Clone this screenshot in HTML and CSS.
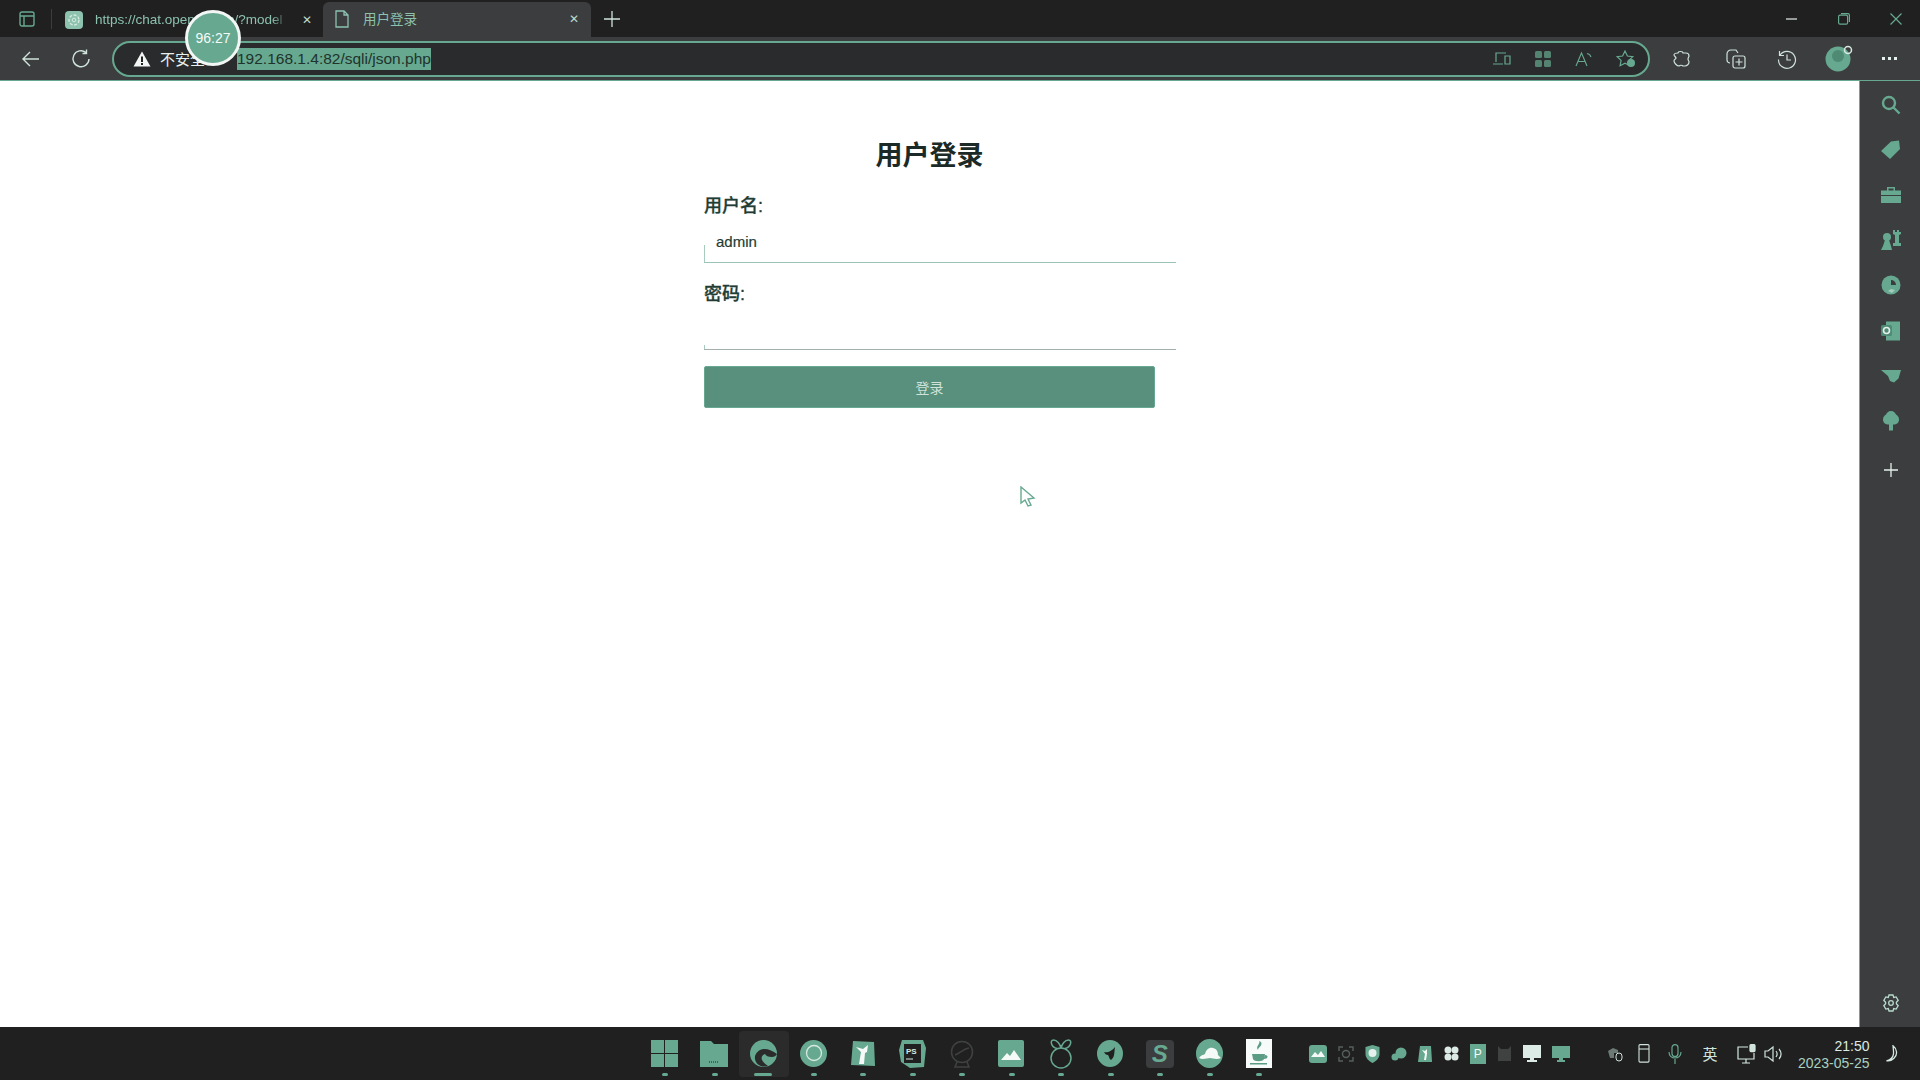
FILE: index.html
```html
<!DOCTYPE html>
<html lang="zh-CN">
<head>
    <meta charset="UTF-8">
    <title>用户登录</title>
    <link rel="stylesheet" href="styles.css">
</head>
<body>
<div class="screen">
    <!-- tab strip -->
    <div class="titlebar">
        <div class="tab-toggle">
            <svg width="16" height="16" viewBox="0 0 16 16" fill="none" stroke="currentColor" stroke-width="1.4"><rect x="1" y="1" width="14" height="14" rx="2"/><path d="M1 5h14M5 5v10"/></svg>
        </div>
        <div class="tab-sep"></div>
        <div class="tab">
            <svg class="favicon" width="18" height="18" viewBox="0 0 18 18"><rect width="18" height="18" rx="4" fill="currentColor"/><circle cx="9" cy="9" r="5" fill="none" stroke="#d6e9e1" stroke-width="1.4" stroke-dasharray="3 1.5"/><circle cx="9" cy="9" r="1.8" fill="none" stroke="#d6e9e1"/></svg>
            <span class="tab-title tab-fade">https://chat.openai.com/?model</span>
            <span class="tab-close">✕</span>
        </div>
        <div class="tab tab-active">
            <svg class="favicon" width="16" height="18" viewBox="0 0 16 18" fill="none" stroke="currentColor" stroke-width="1.3"><path d="M2 1h8l4 4v12H2zM10 1v4h4"/></svg>
            <span class="tab-title">用户登录</span>
            <span class="tab-close">✕</span>
        </div>
        <svg class="new-tab" width="16" height="16" viewBox="0 0 16 16" stroke="#cfe3da" stroke-width="1.3"><path d="M8 0v16M0 8h16"/></svg>
        <div class="win-controls">
            <svg width="12" height="12" viewBox="0 0 12 12" stroke="#e6f0ec" stroke-width="1.2"><path d="M0 6h11"/></svg>
            <svg width="12" height="12" viewBox="0 0 12 12" fill="none" stroke="currentColor" stroke-width="1.2"><rect x="0.6" y="2.2" width="9" height="9" rx="1.5"/><path d="M3 0.6h7a1.5 1.5 0 0 1 1.4 1.4v7"/></svg>
            <svg width="12" height="12" viewBox="0 0 12 12" stroke="currentColor" stroke-width="1.2"><path d="M0.5 0.5l11 11M11.5 0.5l-11 11"/></svg>
        </div>
    </div>

    <!-- address bar row -->
    <div class="toolbar">
        <svg class="nav-btn" width="20" height="20" viewBox="0 0 20 20" fill="none" stroke="#cfe3da" stroke-width="1.4"><path d="M18 10H2M9 3l-7 7 7 7"/></svg>
        <svg class="nav-btn" width="20" height="20" viewBox="0 0 20 20" fill="none" stroke="#cfe3da" stroke-width="1.4"><path d="M15 3.5A8 8 0 1 0 18 10M15.500 0.500v4h-4"/></svg>
        <div class="addressbar">
            <svg class="warn" width="18" height="16" viewBox="0 0 18 16"><path d="M9 0.500L17.500 15.500H0.500z" fill="#f2f7f5"/><path d="M8 5.500h2v5.500H8zM8 12h2v2H8z" fill="#202020"/></svg>
            <span class="insecure">不安全</span>
            <span class="url">192.168.1.4:82/sqli/json.php</span>
            <div class="addr-icons">
                <svg width="18" height="16" viewBox="0 0 18 16" fill="none" stroke="currentColor" stroke-width="1.2"><path d="M3 11V2h10M0 13h10M12 5h5v8h-5z"/></svg>
                <svg width="18" height="18" viewBox="0 0 18 18" fill="currentColor"><rect x="1" y="1" width="7" height="7" rx="1.500" opacity="0.700"/><rect x="10" y="1" width="7" height="7" rx="1.500" opacity="0.700"/><rect x="1" y="10" width="7" height="7" rx="1.500" opacity="0.700"/><rect x="10" y="10" width="7" height="7" rx="1.500" opacity="0.700"/></svg>
                <svg width="18" height="16" viewBox="0 0 18 16" fill="none" stroke="currentColor" stroke-width="1.1"><path d="M1 15L6.500 2 12 15M3 10.500h7M12 2.500a5 5 0 0 1 4 3.500"/></svg>
                <svg width="20" height="18" viewBox="0 0 20 18" fill="none" stroke="currentColor" stroke-width="1.2"><path d="M9 1l2.400 5 5.400 0.700-3.900 3.700 1 5.300L9 13.200 4.100 15.700l1-5.300L1.200 6.700 6.600 6z"/><circle cx="15" cy="13" r="4" fill="currentColor" stroke="none"/></svg>
            </div>
        </div>
        <div class="tool-icons">
            <svg class="t-ext" width="18" height="18" viewBox="0 0 18 18" fill="none" stroke="#cfe3da" stroke-width="1.2"><path d="M6 3c0-2 5-2 5 0h3c2 0 3 1.500 3 3 0 1-1 1.500-1 3s1 2 1 3c0 2-2 4-4 4h-2c-1-1-3-1-4 0-2 0-5-3-5-5s2-2 2-3-2-2-2-3c0-1 2-2 4-2z"/></svg>
            <svg class="t-coll" width="20" height="20" viewBox="0 0 20 20" fill="none" stroke="#cfe3da" stroke-width="1.2"><path d="M4 14A3 3 0 0 1 1 11V5a4 4 0 0 1 4-4h5l2 3"/><rect x="7" y="7" width="12" height="12" rx="2"/><path d="M13 9.500v7M9.500 13h7"/></svg>
            <svg class="t-hist" width="20" height="20" viewBox="0 0 20 20" fill="none" stroke="#cfe3da" stroke-width="1.2"><path d="M3 6a8.500 8.500 0 1 1-1.500 4.500M2.500 2v4.500H7M10 5.500V11h4"/></svg>
            <svg class="t-avatar" width="28" height="28" viewBox="0 0 28 28"><circle cx="13" cy="14" r="12.500" fill="currentColor"/><circle cx="13" cy="11" r="6" fill="#4f8a75"/><circle cx="23" cy="5" r="3.500" fill="none" stroke="#d6e9e1" stroke-width="1.5"/></svg>
            <div class="t-more"><i></i><i></i><i></i></div>
        </div>
    </div>

    <div class="middle">
        <main class="page">
            <form class="login">
                <h1>用户登录</h1>
                <label class="field-label">用户名:</label>
                <input class="field-input user" type="text" value="admin">
                <label class="field-label">密码:</label>
                <input class="field-input pass" type="password">
                <button class="submit" type="button">登录</button>
            </form>
        </main>
        <aside class="sidebar">
            <div class="side-list">
                <svg width="20" height="20" viewBox="0 0 20 20" fill="none" stroke="currentColor" stroke-width="2.400"><circle cx="8" cy="8" r="6"/><path d="M12.500 12.500l6 6"/></svg>
                <svg width="20" height="20" viewBox="0 0 20 20" fill="currentColor"><path d="M0 11L10 1.500 18 0.500 19 9 9 19z"/></svg>
                <svg width="20" height="18" viewBox="0 0 20 18" fill="currentColor"><path d="M0 4.500h20V17H0zM6 4.500V1h8v3.500h-1.500V2.500h-5v2z"/><path d="M0 9.500h20" stroke="#3b3d3f"/></svg>
                <svg width="21" height="22" viewBox="0 0 21 22" fill="currentColor"><path d="M12 1h2v2h2V1h2v2h2v2l-2 1v8h2v3h-8v-3h2V6l-2-1z"/><circle cx="6" cy="8" r="4"/><path d="M4 11h4l2 6 1 4H0l2-4z"/></svg>
                <svg width="20" height="20" viewBox="0 0 20 20"><circle cx="10" cy="10" r="9.500" fill="currentColor"/><path d="M10 5a5 5 0 0 1 5 5L10 10z" fill="#3b3d3f"/><path d="M7 16l3-2 4 1-3 3z" fill="#cfe3da" opacity="0.600"/></svg>
                <svg width="20" height="20" viewBox="0 0 20 20"><path d="M5 0.500h14v19H5z" fill="currentColor"/><rect x="0" y="4" width="11" height="11" rx="1.500" fill="#4f8a75"/><circle cx="5.500" cy="9.500" r="3" fill="none" stroke="#e6f0ec" stroke-width="1.600"/></svg>
                <svg width="20" height="14" viewBox="0 0 20 14" fill="currentColor"><path d="M0 1h20l-2.500 8.500L13 13.500 9 12 7 7z"/></svg>
                <svg width="16" height="20" viewBox="0 0 16 20" fill="currentColor"><path d="M8 0c3 0 4 2 5 3.500 2 1 3 3 3 5 0 3-2 5-6 5v6H6v-6c-4 0-6-2-6-5 0-2 1-4 3-5C4 2 5 0 8 0z"/></svg>
                <svg class="side-plus" width="14" height="14" viewBox="0 0 14 14" stroke="#e6f0ec" stroke-width="1.300"><path d="M7 0v14M0 7h14"/></svg>
            </div>
            <svg width="18" height="18" viewBox="0 0 18 18" fill="none" stroke="#b9dacd" stroke-width="1.300"><path d="M7 1h4l0.700 2.500 2.500-0.600 2 3.400-1.800 2 0 1.400 1.800 2-2 3.400-2.500-0.600L11 17H7l-0.700-2.500-2.500 0.600-2-3.400 1.800-2 0-1.400-1.800-2 2-3.400 2.500 0.600z"/><circle cx="9" cy="9" r="2.300"/></svg>
        </aside>
    </div>

    <!-- windows taskbar -->
    <div class="taskbar">
        <div class="apps">
            <div class="app"><svg width="27" height="27" viewBox="0 0 27 27" fill="currentColor"><path d="M0 0h13v13H0zM14 0h13v13H14zM0 14h13v13H0zM14 14h13v13H14z"/></svg></div>
            <div class="app"><svg width="28" height="26" viewBox="0 0 28 26" fill="currentColor"><path d="M0 0h11l3 3h14v23H0z"/><path d="M9 21h10" stroke="#202020" stroke-dasharray="1 1"/></svg></div>
            <div class="app app-on"><svg width="27" height="27" viewBox="0 0 27 27"><circle cx="13.500" cy="13.500" r="13.500" fill="currentColor"/><path d="M14 9c5 0 9 2 13 5-1 2-3 3-5 3-4 0-6-1-7-3-3 1-4 3-3 6 1 2 3 4 6 6-6 2-12-1-13-7-1-5 4-10 9-10z" fill="#2b2b2b"/></svg></div>
            <div class="app"><svg width="27" height="27" viewBox="0 0 27 27"><circle cx="13.500" cy="13.500" r="13.500" fill="currentColor"/><circle cx="14" cy="13" r="7.500" fill="none" stroke="#d6e9e1" stroke-width="1.300"/></svg></div>
            <div class="app"><svg width="25" height="27" viewBox="0 0 25 27"><path d="M3 1l21 1 1 24-24-1z" fill="currentColor"/><path d="M6 7l7 2 5-4-1 7-2 1-1 11H9l2-12z" fill="#f5faf8"/></svg></div>
            <div class="app"><svg width="27" height="29" viewBox="0 0 27 29"><path d="M3 1h21l3 8-2 19-14 1-9-6-2-12z" fill="currentColor"/><rect x="5" y="5" width="17" height="19" fill="#202020"/><text class="ps-text" x="7" y="15">PS</text><path d="M7 20h7" stroke="#d6e9e1"/></svg></div>
            <div class="app"><svg width="24" height="28" viewBox="0 0 24 28" fill="none" stroke="#3f4241" stroke-width="1.500"><circle cx="12" cy="12" r="10.500"/><path d="M5 15c4-1 8-6 14-7M7 22l-2 5h14l-2-5"/></svg></div>
            <div class="app"><svg width="26" height="27" viewBox="0 0 26 27"><rect width="26" height="27" rx="2" fill="currentColor"/><path d="M3 20l6-7 3 3 4-6 7 10z" fill="#f5faf8"/></svg></div>
            <div class="app"><svg width="26" height="30" viewBox="0 0 26 30" fill="none" stroke="currentColor" stroke-width="1.500"><circle cx="13" cy="19" r="10"/><path d="M9 9.500C3 8 1.500 1 5.500 1 9 1 12 5 13 9c1-4 4-8 7.500-8 4 0 2.500 7-3.500 8.500"/></svg></div>
            <div class="app"><svg width="26" height="27" viewBox="0 0 26 27"><ellipse cx="13" cy="13.500" rx="13" ry="13.500" fill="currentColor"/><path d="M7 12c4 1 8-1 11-5-1 6 0 10-4 13-2-1-2-4-3-5-2 0-3-1-4-3z" fill="#202020"/></svg></div>
            <div class="app"><span class="sublime">S</span></div>
            <div class="app"><svg width="27" height="29" viewBox="0 0 27 29"><ellipse cx="13.500" cy="14.500" rx="13.500" ry="14.500" fill="currentColor"/><path d="M3 19c2-3 4-3 6-4 1-4 4-7 8-6 4 1 5 4 5 7l3 3c-5 2-8 0-11 0s-7 2-11 0z" fill="#f5faf8"/></svg></div>
            <div class="app"><svg width="26" height="29" viewBox="0 0 26 29"><rect width="26" height="29" fill="#f7fbf9"/><path d="M13 2c2 3-4 5-1 9 0-3 5-4 3-8zM6 15h13l-1 5c-1 3-10 3-11 0zM4 24h17v1.500H4zM19 16c4 0 3 4-1 4" fill="#5b9c85"/></svg></div>
        </div>
        <div class="tray-apps">
            <svg width="18" height="18" viewBox="0 0 18 18"><rect width="18" height="18" rx="3" fill="currentColor"/><path d="M2 12l4-5 3 3 3-4 4 6z" fill="#f5faf8"/></svg>
            <svg width="16" height="16" viewBox="0 0 16 16" fill="none" stroke="#56605c" stroke-width="1.400"><path d="M1 5V1h4M11 1h4v4M15 11v4h-4M5 15H1v-4"/><circle cx="8" cy="8" r="3.500"/></svg>
            <svg width="15" height="18" viewBox="0 0 15 18"><path d="M0.500 2l7-2 7 2v7c0 4-3 7-7 9-4-2-7-5-7-9z" fill="currentColor"/><circle cx="7.500" cy="8" r="4" fill="#e6f0ec"/></svg>
            <svg width="16" height="14" viewBox="0 0 16 14"><circle cx="10" cy="6" r="5.500" fill="currentColor"/><circle cx="4" cy="10" r="3.500" fill="currentColor"/></svg>
            <svg width="14" height="16" viewBox="0 0 14 16"><path d="M2 0h11l1 16H0z" fill="currentColor"/><path d="M4 4l3 1 2-2v5l-1 6H6l1-6z" fill="#f5faf8"/></svg>
            <svg width="15" height="15" viewBox="0 0 15 15" fill="#dcebe5"><circle cx="4" cy="4" r="3.500"/><circle cx="11" cy="4" r="3.500"/><circle cx="4" cy="11" r="3.500"/><circle cx="11" cy="11" r="3.500"/></svg>
            <span class="tray-p">P</span>
            <svg width="15" height="15" viewBox="0 0 15 15" fill="#3f4241"><path d="M1 0l3 3h7l3-3v15H1z"/></svg>
            <svg width="18" height="17" viewBox="0 0 18 17"><path d="M0 0h18v13H11v2h3v2H4v-2h3v-2H0z" fill="#dcebe5"/></svg>
            <svg width="18" height="16" viewBox="0 0 18 16" fill="currentColor"><path d="M0 0h18v12h-7v2h2v2H5v-2h2v-2H0z"/></svg>
        </div>
        <div class="tray-sys">
            <svg class="s-net" width="16" height="16" viewBox="0 0 16 16"><path d="M0 5l5-3 5 2v3H6v5H2z" fill="#6b7a74"/><rect x="8" y="7" width="6" height="8" rx="3" fill="none" stroke="#cfe3da"/></svg>
            <svg class="s-usb" width="12" height="20" viewBox="0 0 12 20" fill="none" stroke="#cfe3da" stroke-width="1.100"><rect x="1" y="0.600" width="10" height="17.500" rx="1"/><path d="M1 5h10"/></svg>
            <svg class="s-mic" width="14" height="20" viewBox="0 0 14 20" fill="none" stroke="currentColor" stroke-width="1.200"><rect x="4" y="0.600" width="6" height="12" rx="3"/><path d="M1 8c0 8 12 8 12 0M7 15v5"/></svg>
            <span class="s-ime">英</span>
            <svg class="s-pc" width="20" height="20" viewBox="0 0 20 20" fill="none" stroke="#d6e9e1" stroke-width="1.200"><path d="M11 3H1v12h16V9M9 15v4M5 19h8"/><rect x="13" y="0.600" width="5" height="7" rx="1" fill="#cfe3da"/></svg>
            <svg class="s-vol" width="20" height="18" viewBox="0 0 20 18" fill="none" stroke="#cfe3da" stroke-width="1.200"><path d="M1 6h3l5-4v14l-5-4H1zM12 6c1.500 2 1.500 4 0 6M15 4c2.500 3 2.500 7 0 10"/></svg>
            <div class="clock"><span class="clock-time">21:50</span><span>2023-05-25</span></div>
            <svg class="s-moon" width="16" height="18" viewBox="0 0 16 18" fill="none" stroke="#d6e9e1" stroke-width="1.300"><path d="M8 0.800c4 3 5 9 1 12.500-2 2-5 3-7.500 2.500 4-1 6.500-3 7-7 0.200-3-0.300-6-0.500-8z"/></svg>
        </div>
    </div>

    <!-- things sitting on top -->
    <div class="timer-badge">96:27</div>
    <svg class="cursor" width="17" height="22" viewBox="0 0 17 22" fill="#fff" stroke="#67a990" stroke-width="1.400"><path d="M1 1v16l4-3 3 6 3-1-3-6 6-1z"/></svg>
</div>
</body>
</html>
```

FILE: styles.css
```css
* {
    box-sizing: border-box;
}
body {
    margin: 0;
    background-color: #fff;
    font-family: "Liberation Sans", "Noto Sans CJK SC", sans-serif;
}
svg {
    display: block;
    flex: none;
}
.screen {
    position: relative;
    display: flex;
    flex-direction: column;
    width: 1920px;
    height: 1080px;
    overflow: hidden;
    color: #67a990; /* everything in the picture is tinted with this green */
}

/* tab strip */
.titlebar {
    display: flex;
    align-items: flex-end;
    height: 37px;
    padding-left: 19px;
    background-color: #202020;
}
.tab-toggle {
    align-self: center;
    width: 24px;
    margin-right: 8px;
}
.tab-sep {
    align-self: center;
    width: 1px;
    height: 20px;
    margin-right: 13px;
    background-color: #3b3d3f;
}
.tab {
    display: flex;
    align-items: center;
    width: 255px;
    height: 35px;
    margin-right: 3px;
    font-size: 13.500px;
    color: #8cc2ae;
}
.tab .favicon {
    margin-right: 12px;
}
.tab-title {
    flex: 1;
    overflow: hidden;
    white-space: nowrap;
}
.tab-fade {
    -webkit-mask-image: linear-gradient(to left, transparent, #000 16px);
    mask-image: linear-gradient(to left, transparent, #000 16px);
}
.tab-close {
    width: 14px;
    margin-right: 4px;
    margin-left: 14px;
    font-size: 12px;
    color: #b9dacd;
}
.tab-active {
    width: 268px;
    padding-left: 11px;
    padding-bottom: 2px;
    background-color: #3b3d3f;
    border-radius: 6px 6px 0 0;
}
.tab-active .favicon {
    margin-right: 13px;
}
.tab-active .tab-title {
    padding-bottom: 2px;
}
.tab-active .tab-close {
    margin-right: 8px;
}
.new-tab {
    align-self: center;
    margin-left: 10px;
}
.win-controls {
    display: flex;
    gap: 40px;
    margin-left: auto;
    margin-right: 18px;
    align-self: center;
}

/* toolbar */
.toolbar {
    display: flex;
    align-items: center;
    height: 44px;
    padding-left: 21px;
    background-color: #3b3d3f;
    border-bottom: 1px solid #67a990;
}
.nav-btn {
    margin-right: 30px;
}
.toolbar .nav-btn:nth-child(2) {
    margin-right: 21px;
}
.addressbar {
    display: flex;
    align-items: center;
    width: 1538px;
    height: 36px;
    padding-left: 19px;
    padding-right: 12px;
    background-color: #2a2b2c;
    border: 2px solid #67a990;
    border-radius: 18px;
    font-size: 15px;
    color: #e6f0ec;
}
.insecure {
    width: 77px;
    margin-left: 9px;
}
.url {
    padding: 2px 0;
    background-color: #67a990;
    color: #20332c;
    font-size: 15.500px;
}
.addr-icons {
    display: flex;
    align-items: center;
    gap: 23px;
    margin-left: auto;
    color: #67a990;
}
.tool-icons {
    display: flex;
    align-items: center;
    padding-left: 22px;
}
.t-coll {
    margin-left: 36px;
}
.t-hist {
    margin-left: 31px;
}
.t-avatar {
    margin-left: 28px;
}
.t-more {
    display: flex;
    gap: 3px;
    margin-left: 29px;
}
.t-more i {
    width: 3px;
    height: 3px;
    background-color: #e6f0ec;
}

/* page */
.middle {
    flex: 1;
    display: flex;
    min-height: 0;
}
.page {
    width: 1859px;
    background-color: #fff;
    display: flex;
    justify-content: center;
}
.login {
    width: 451px;
    padding-top: 55px;
}
.login h1 {
    margin: 0 0 17px;
    text-align: center;
    font-size: 27px;
    line-height: 40px;
    font-weight: 700;
    color: #1b2a26;
}
.field-label {
    display: block;
    height: 26px;
    margin-bottom: 10px;
    font-size: 18px;
    line-height: 26px;
    font-weight: 500;
    color: #1f3d34;
    -webkit-text-stroke: 0.3px #1f3d34;
}
.field-input {
    display: block;
    box-sizing: content-box;
    width: 451px;
    height: 24px;
    margin: 0 0 18px;
    padding: 0 9px 9px 12px;
    border: none;
    border-bottom: 1px solid #9cc4b5;
    outline: none;
    font-family: "Liberation Sans", sans-serif;
    font-size: 15px;
    color: #1f3d34;
    -webkit-text-stroke: 0.2px #1f3d34;
    background: linear-gradient(#a9cbbd, #a9cbbd) no-repeat left bottom / 1px 17px;
}
.field-input.pass {
    height: 32px;
    margin-bottom: 16px;
    padding-bottom: 0;
    border-bottom-color: #a3b0ab;
    background-size: 1px 4px;
}
.submit {
    display: block;
    width: 451px;
    height: 42px;
    border: 1px solid #67a990;
    border-radius: 2px;
    background-color: #588f7d;
    color: #cfe3da;
    font-family: "Liberation Sans", "Noto Sans CJK SC", sans-serif;
    font-size: 14px;
}
.sidebar {
    flex: 1;
    display: flex;
    flex-direction: column;
    align-items: center;
    justify-content: space-between;
    padding: 1px 0 15px 2px;
    background-color: #3b3d3f;
    border-left: 1px solid #67a990;
}
.side-list {
    display: grid;
    grid-auto-rows: 45.200px;
    place-items: center;
}
.side-plus {
    margin-top: 8px;
}

/* taskbar */
.taskbar {
    display: flex;
    align-items: center;
    height: 53px;
    padding-left: 640px;
    background-color: #202020;
}
.apps {
    display: flex;
}
.app {
    position: relative;
    display: flex;
    align-items: center;
    justify-content: center;
    width: 49.500px;
    height: 46px;
}
.app::after {
    content: "";
    position: absolute;
    bottom: 1px;
    left: 22px;
    width: 6px;
    height: 3px;
    border-radius: 2px;
    background-color: #67a990;
}
.app-on {
    background-color: #2b2b2b;
    border-radius: 4px;
}
.app-on::after {
    left: 15px;
    width: 18px;
}
.ps-text {
    font-family: "Liberation Sans", sans-serif;
    font-size: 8px;
    font-weight: 700;
    fill: #d6e9e1;
}
.sublime {
    width: 28px;
    height: 28px;
    border-radius: 4px;
    background-color: #3b3d3f;
    text-align: center;
    font-size: 24px;
    line-height: 28px;
    font-weight: 700;
    font-style: italic;
}
.tray-apps {
    display: flex;
    align-items: center;
    justify-content: space-between;
    width: 262px;
    margin-left: 25px;
}
.tray-p {
    width: 16px;
    height: 20px;
    background-color: #67a990;
    color: #f5faf8;
    font-size: 12px;
    line-height: 20px;
    text-align: center;
}
.tray-sys {
    display: flex;
    align-items: center;
    margin-left: 37px;
    color: #67a990;
}
.s-usb {
    margin-left: 14px;
}
.s-mic {
    margin-left: 18px;
}
.s-ime {
    width: 20px;
    margin-left: 21px;
    font-size: 15px;
    color: #cfe3da;
}
.s-pc {
    margin-left: 14px;
}
.s-vol {
    margin-left: 7px;
}
.clock {
    display: flex;
    flex-direction: column;
    align-items: flex-end;
    width: 82px;
    margin-left: 4px;
    padding-top: 2px;
    font-size: 14px;
    line-height: 17px;
    color: #a9d0c1;
}
.clock-time {
    color: #dcebe5;
}
.s-moon {
    margin-left: 15px;
}

/* overlays */
.timer-badge {
    position: absolute;
    left: 185px;
    top: 10px;
    width: 56px;
    height: 56px;
    border: 3px solid #f2f7f5;
    border-radius: 50%;
    background-color: #67a990;
    color: #f5faf8;
    font-size: 14px;
    line-height: 50px;
    text-align: center;
}
.cursor {
    position: absolute;
    left: 1020px;
    top: 486px;
}
```
